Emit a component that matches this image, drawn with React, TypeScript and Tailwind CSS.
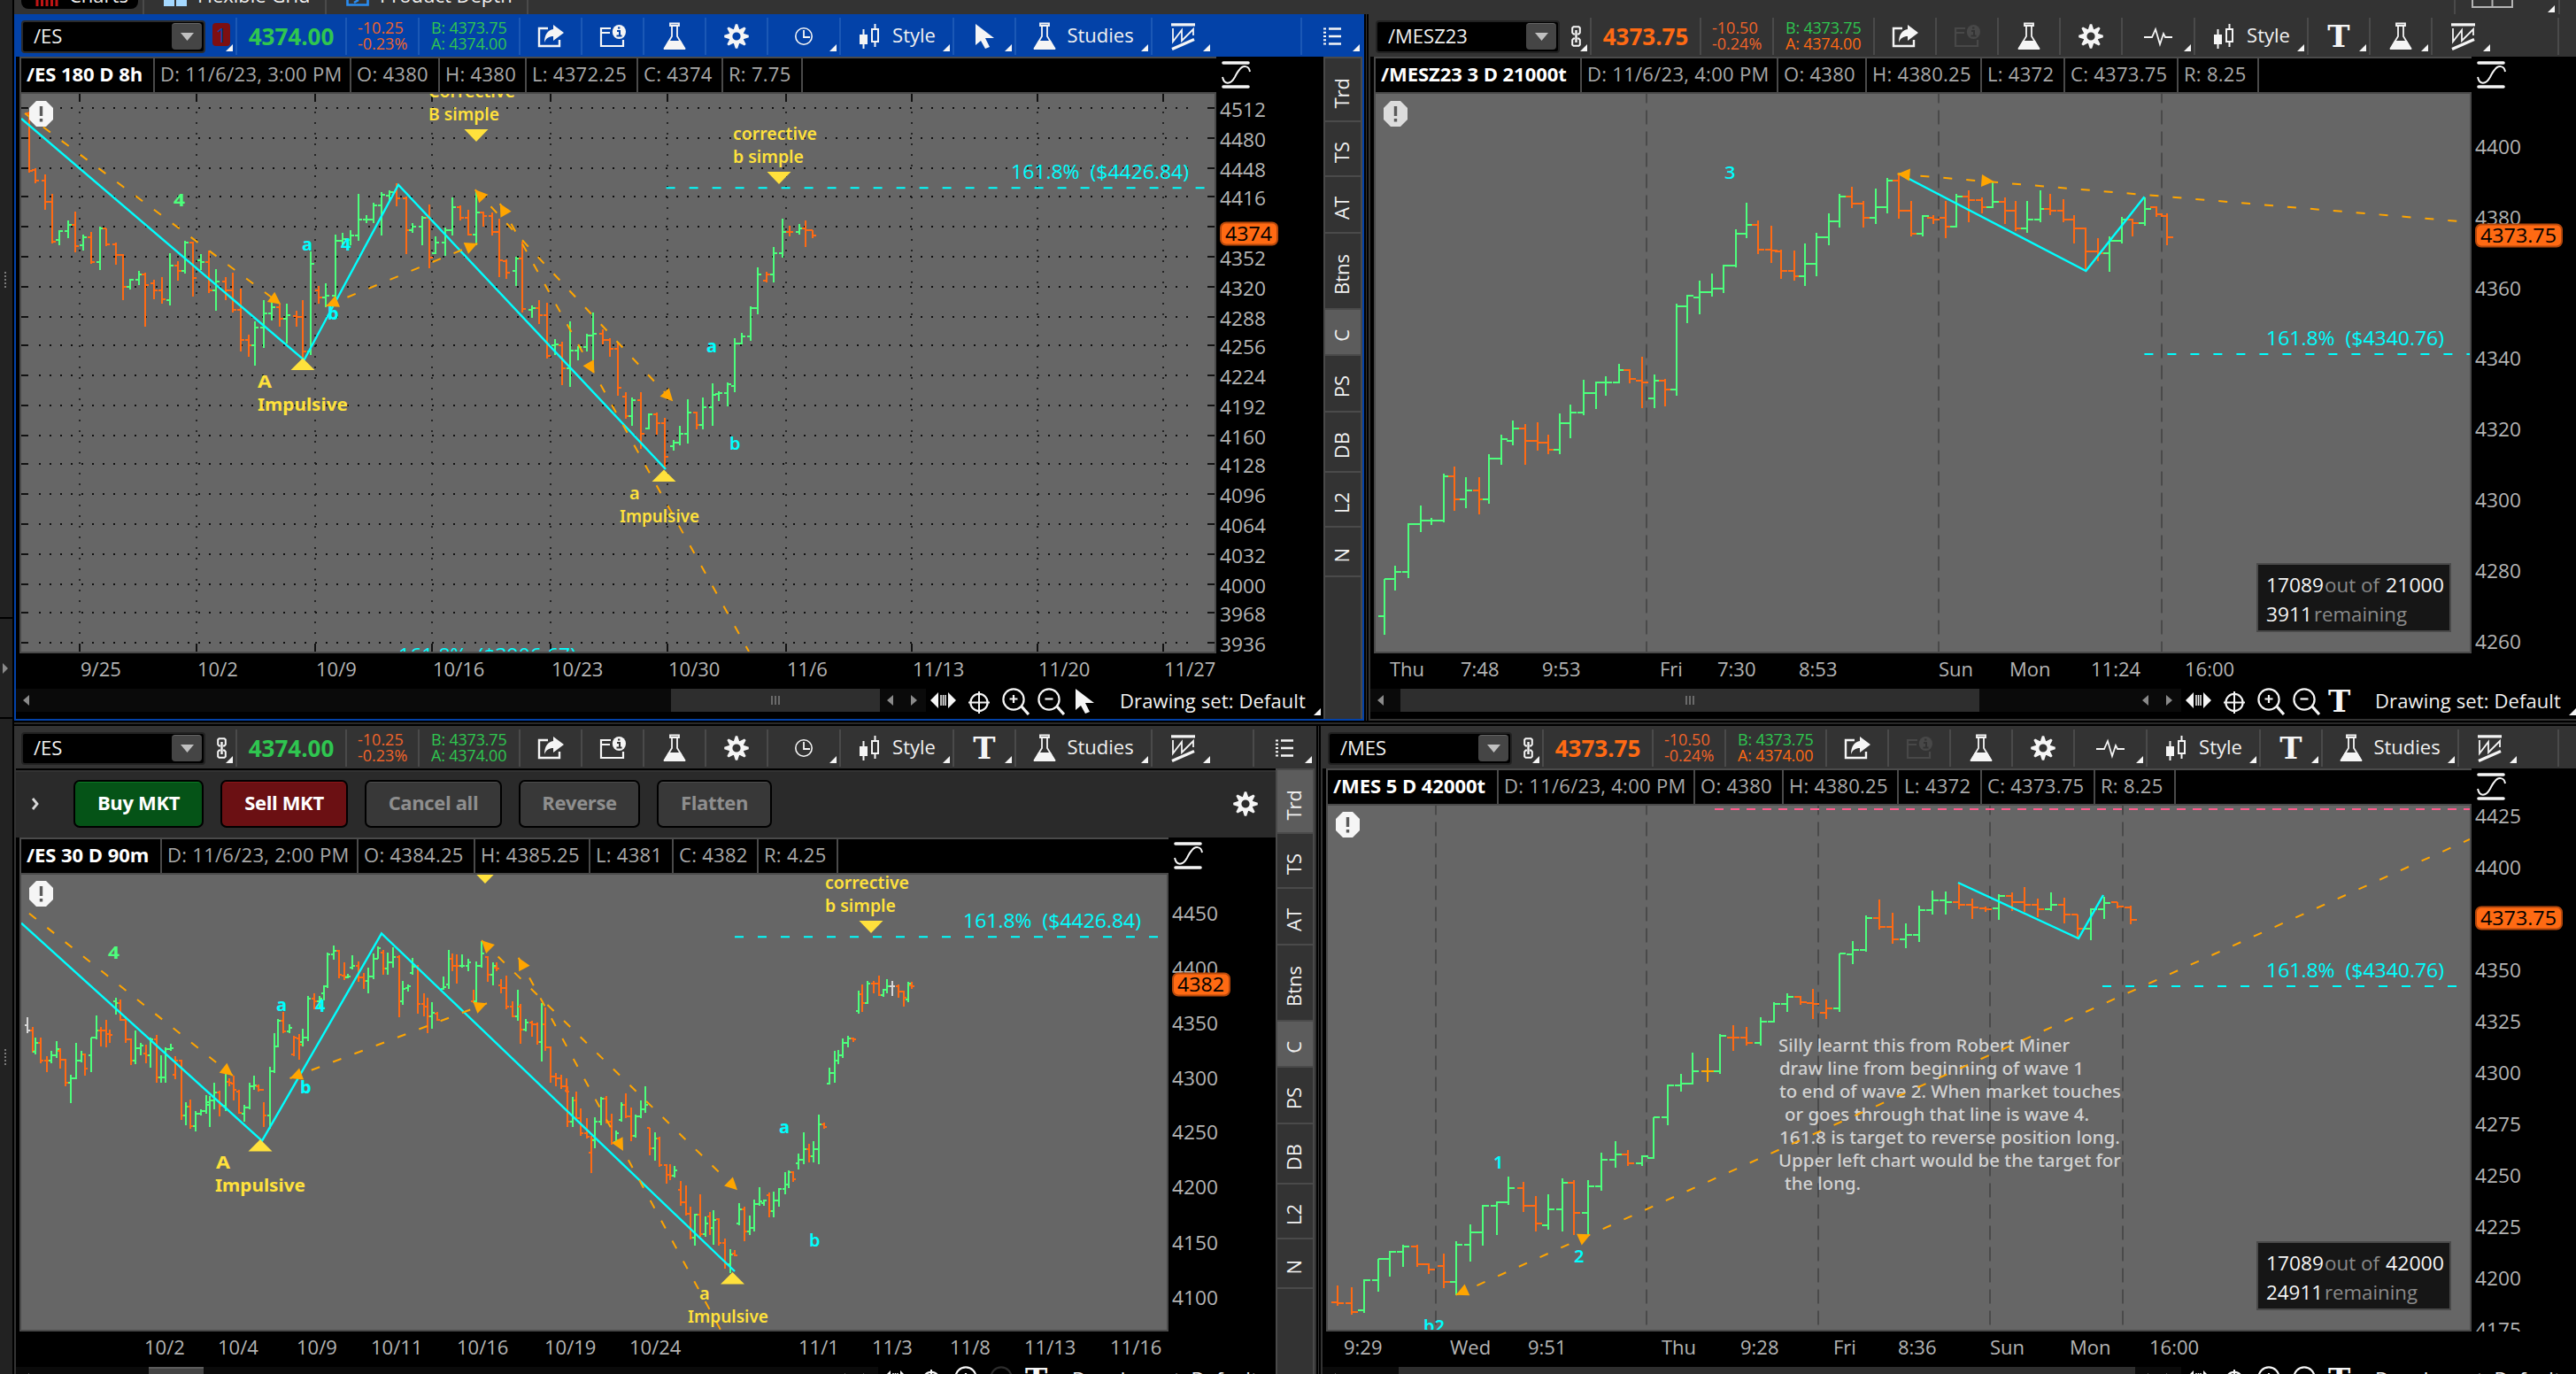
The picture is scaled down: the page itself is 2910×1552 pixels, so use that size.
import type { ReactNode } from "react";

const ORANGE = "#ffa500";
const CYAN = "#00ffff";
const YELLOW = "#ffe13c";
const UP = "#4dff7c";
const DOWN = "#ff6a13";

/* ---------- icons ---------- */

const ShareIcon = () => (
  <svg width="30" height="26" viewBox="0 0 30 26">
    <path d="M12 4H2v20h23v-7" fill="none" stroke="#f5f5f5" strokeWidth="2.4" />
    <path d="M18 0l12 9-12 9v-5c-5 0-8 2-10 7 0-9 4-14 10-15z" fill="#f5f5f5" />
  </svg>
);

const CalendarIcon = ({ color = "#f5f5f5", back = "#333333" }: { color?: string; back?: string }) => (
  <svg width="30" height="26" viewBox="0 0 30 26">
    <path d="M13 4H2v20h25v-7M2 9h10" fill="none" stroke={color} strokeWidth="2.2" />
    <ellipse cx="22.400" cy="8" rx="7.6" ry="8" fill={color} />
    <path d="M20 7h3v5.500M19.5 12.5h6M21 3.6h2.4" fill="none" stroke={back} strokeWidth="2" />
  </svg>
);

const FlaskIcon = () => (
  <svg width="26" height="32" viewBox="0 0 26 32">
    <path d="M8 1.500h10V4H8zM10 4v12L2 29h22L16 16V4" fill="none" stroke="#f5f5f5" strokeWidth="1.8" />
    <path d="M6 21h14l5.500 10h-25z" fill="#f5f5f5" />
  </svg>
);

const GearIcon = () => (
  <svg width="28" height="28" viewBox="-14 -14 28 28">
    {[0, 45, 90, 135, 180, 225, 270, 315].map((a) => (
      <path key={a} d="M-3.4 -7L-1.2 -13.8H1.2L3.4 -7z" fill="#f5f5f5" transform={`rotate(${a})`} />
    ))}
    <circle r="6.6" fill="none" stroke="#f5f5f5" strokeWidth="4" />
  </svg>
);

const ClockIcon = () => (
  <svg width="22" height="22" viewBox="0 0 22 22">
    <circle cx="11" cy="11" r="9.2" fill="none" stroke="#f5f5f5" strokeWidth="1.6" />
    <path d="M11 4v8h7" fill="none" stroke="#f5f5f5" strokeWidth="1.8" />
  </svg>
);

const PulseIcon = () => (
  <svg width="32" height="24" viewBox="0 0 32 24">
    <path d="M0 13h9l4-9 5 17 4-12 2 4h8" fill="none" stroke="#f5f5f5" strokeWidth="1.8" />
  </svg>
);

const CandleIcon = () => (
  <svg width="23" height="28" viewBox="0 0 23 28">
    <path d="M0 12h9v11H0zM3.5 6h2v22h-2z" fill="#f5f5f5" />
    <path d="M14 6h7v14h-7zM17.5 0v6M17.5 20v6" fill="none" stroke="#f5f5f5" strokeWidth="2" />
  </svg>
);

const CursorIcon = () => (
  <svg width="21" height="28" viewBox="0 0 21 28">
    <path d="M0 0v24l6-5 5 9 5-2-5-10h10z" fill="#f5f5f5" />
  </svg>
);

const TextIcon = () => (
  <span className="font-['DejaVu_Serif',serif] text-[34px] font-bold leading-[34px] text-[#f5f5f5]">T</span>
);

const PatternIcon = () => (
  <svg width="27" height="31" viewBox="0 0 27 31">
    <path d="M0 1.8h27M1 29.5l25-11" fill="none" stroke="#f5f5f5" strokeWidth="3.2" />
    <path d="M2 6v15L12 8v12L25 7v7" fill="none" stroke="#f5f5f5" strokeWidth="1.8" />
  </svg>
);

const ListIcon = () => (
  <svg width="20" height="20" viewBox="0 0 20 20">
    <path d="M6 1.5h14M6 10h14M6 18.5h14" stroke="#f5f5f5" strokeWidth="2.6" />
    <path d="M0 1.5h3M0 5.8h3M0 10h3M0 14.2h3M0 18.5h3" stroke="#f5f5f5" strokeWidth="2" />
  </svg>
);

const LinkIcon = () => (
  <svg width="11" height="24" viewBox="0 0 11 24">
    <path
      d="M4 9.500H2.500L1.200 8V2.500L2.500 1.200h6L9.800 2.500V8L8.500 9.500H7M4 14.500H2.500L1.200 16v5.500l1.300 1.300h6l1.300-1.300V16l-1.300-1.500H7"
      fill="none"
      stroke="#f5f5f5"
      strokeWidth="2"
    />
    <path d="M5.500 5v14" stroke="#f5f5f5" strokeWidth="2.4" />
  </svg>
);

const Corner = () => (
  <svg className="absolute bottom-1 right-[3px]" width="8" height="8" viewBox="0 0 8 8">
    <path d="M8 0v8H0z" fill="#f5f5f5" />
  </svg>
);

const MoveIcon = () => (
  <svg width="29" height="18" viewBox="0 0 29 18">
    <path d="M0 9l9-9v18zM29 9l-9-9v18z" fill="#f5f5f5" />
    <path d="M12 3v12M14.5 3v12M17 3v12" stroke="#f5f5f5" strokeWidth="1.5" />
  </svg>
);

const CrosshairIcon = () => (
  <svg width="24" height="25" viewBox="0 0 24 25">
    <circle cx="12" cy="12.5" r="9.6" fill="none" stroke="#f5f5f5" strokeWidth="2.2" />
    <path d="M0 12.5h24M12 0v25" stroke="#f5f5f5" strokeWidth="2" />
  </svg>
);

const ZoomIcon = ({ minus, dim }: { minus?: boolean; dim?: boolean }) => (
  <svg width="31" height="31" viewBox="0 0 31 31">
    <g fill="none" stroke={dim ? "#2c2c2c" : "#f5f5f5"}>
      <circle cx="13" cy="13" r="11.6" strokeWidth="2.2" />
      <path d="M22 21l8 9" strokeWidth="3.2" />
      <path d={minus ? "M8.5 12.5h9" : "M8.5 12.5h9M13 8v9"} strokeWidth="2.2" />
    </g>
  </svg>
);

/* ---------- chart primitives ---------- */

type Bar = [string, number, number, number, number, number];

interface BarsProps {
  x: number;
  y: number;
  sx: number;
  sy?: number;
  tick?: number;
  rows: Bar[];
}

// every row: kind, time, high, low, open, close
const Bars = ({ x, y, sx, sy = 1 / 3, tick = 4, rows }: BarsProps) => (
  <g strokeWidth="2" fill="none">
    {rows.map(([kind, t, h, l, o, c], i) => {
      const px = Math.round(x + t * sx);
      const py = (v: number) => Math.round(y + v * sy);
      const color = kind === "g" ? UP : kind === "r" ? DOWN : kind === "o" ? ORANGE : "#d6d6d6";
      return (
        <path
          key={i}
          stroke={color}
          d={`M${px} ${py(h)}V${py(l)}M${px - tick} ${py(o)}H${px}M${px} ${py(c)}h${tick}`}
        />
      );
    })}
  </g>
);

interface TProps {
  x: number;
  y: number;
  w?: number;
  size?: number;
  fill?: string;
  weight?: number;
  children: ReactNode;
}

const T = ({ x, y, w, size = 22, fill = "#b4b4b4", weight = 400, children }: TProps) => (
  <text
    x={x}
    y={y}
    fontSize={size}
    fontWeight={weight}
    fill={fill}
    textLength={w}
    lengthAdjust="spacingAndGlyphs"
    className="whitespace-pre"
  >
    {children}
  </text>
);

const head = (x: number, y: number, fx: number, fy: number) => {
  const d = Math.hypot(fx - x, fy - y);
  const ux = (fx - x) / d;
  const uy = (fy - y) / d;
  const bx = x + ux * 14;
  const by = y + uy * 14;
  return `M${x} ${y}L${bx - uy * 7} ${by + ux * 7}L${bx + uy * 7} ${by - ux * 7}z`;
};

interface ArrowProps {
  from: [number, number];
  to: [number, number];
  start?: boolean;
  extend?: [number, number];
}

const Arrow = ({ from, to, start, extend }: ArrowProps) => (
  <g>
    <path
      d={`M${from.join(" ")}L${(extend ?? to).join(" ")}`}
      stroke={ORANGE}
      strokeWidth="2"
      strokeDasharray="10 16"
    />
    {start && <path d={head(from[0], from[1], to[0], to[1])} fill={ORANGE} />}
    <path d={head(to[0], to[1], from[0], from[1])} fill={ORANGE} />
  </g>
);

interface LevelProps {
  x1: number;
  x2: number;
  y: number;
  label: string;
  lx: number;
  ly: number;
}

const Level = ({ x1, x2, y, label, lx, ly }: LevelProps) => (
  <g>
    <path d={`M${x1} ${y}H${x2}`} stroke={CYAN} strokeWidth="2" strokeDasharray="10 16" />
    <T x={lx} y={ly} w={201} fill={CYAN}>{label}</T>
  </g>
);

const TriUp = ({ x, y }: { x: number; y: number }) => <path d={`M${x} ${y}l13.5 13.5h-27z`} fill={YELLOW} />;
const TriDown = ({ x, y }: { x: number; y: number }) => <path d={`M${x} ${y}l13.5 -14h-27z`} fill={YELLOW} />;

const Alert = ({ x, y, fill = "#f5f5f5" }: { x: number; y: number; fill?: string }) => (
  <g transform={`translate(${x} ${y})`}>
    <path d="M8 0h11l8 8v13l-8 8H8l-8-8V8z" fill={fill} />
    <path d="M13.5 6v11M13.5 20v3.4" stroke="#5a5a5a" strokeWidth="3.4" />
  </g>
);

const SessionLines = ({ xs, y1, y2 }: { xs: number[]; y1: number; y2: number }) => (
  <g stroke="#4a4a4a" strokeWidth="2" strokeDasharray="16 8">
    {xs.map((x) => (
      <path key={x} d={`M${x} ${y1}V${y2}`} strokeDashoffset="5.5" />
    ))}
  </g>
);

type Label = [string, number, number, string, number, number?];

const Labels = ({ items }: { items: Label[] }) => (
  <g fontFamily="Noto Sans, sans-serif" fontSize="20">
    {items.map(([s, x, y, fill, weight, w], i) => (
      <text key={i} x={x} y={y} fontWeight={weight} fill={fill} textLength={w} lengthAdjust="spacingAndGlyphs">
        {s}
      </text>
    ))}
  </g>
);

/* ---------- bar data ---------- */

const es8h: Bar[] = [
  ["r", 64, 378, 585, 385, 580], ["r", 79, 570, 620, 577, 612], ["r", 99, 592, 710, 612, 685], ["r", 115, 658, 825, 685, 818],
  ["g", 131, 780, 830, 812, 782], ["g", 150, 748, 808, 782, 763], ["r", 166, 718, 855, 763, 835], ["g", 184, 795, 850, 830, 803],
  ["r", 201, 786, 895, 803, 889], ["g", 221, 768, 915, 889, 775], ["r", 236, 773, 835, 775, 829], ["r", 256, 822, 897, 829, 865],
  ["r", 272, 862, 1018, 865, 973], ["g", 288, 945, 980, 973, 949], ["g", 307, 917, 965, 949, 931], ["r", 322, 923, 1108, 931, 965],
  ["r", 342, 947, 1015, 961, 985], ["r", 359, 940, 1029, 985, 1015], ["g", 377, 857, 1035, 1016, 901], ["r", 393, 885, 950, 901, 919],
  ["g", 409, 815, 928, 919, 822], ["r", 428, 818, 1005, 822, 943], ["g", 444, 862, 915, 883, 889], ["r", 463, 848, 993, 889, 985],
  ["g", 479, 911, 1054, 985, 955], ["r", 500, 940, 1018, 955, 985], ["r", 515, 923, 1060, 985, 1051], ["r", 534, 977, 1192, 1051, 1153],
  ["r", 550, 1133, 1210, 1153, 1171], ["g", 565, 1090, 1240, 1171, 1111], ["g", 585, 1017, 1180, 1111, 1063], ["g", 601, 1023, 1085, 1063, 1040],
  ["r", 620, 1030, 1108, 1040, 1081], ["g", 636, 1030, 1165, 1081, 1069], ["r", 656, 1054, 1108, 1072, 1075], ["r", 671, 1018, 1222, 1075, 1190],
  ["g", 687, 851, 1203, 1190, 895], ["r", 706, 970, 1030, 985, 1009], ["g", 722, 960, 1040, 1009, 1003], ["g", 742, 796, 1010, 1003, 817],
  ["g", 759, 790, 830, 817, 810], ["g", 777, 780, 830, 812, 799], ["g", 793, 658, 815, 799, 745], ["g", 812, 730, 755, 745, 745],
  ["g", 828, 688, 755, 745, 697], ["g", 844, 652, 797, 697, 660], ["g", 863, 645, 680, 662, 650], ["r", 879, 622, 700, 650, 673],
  ["r", 899, 665, 862, 673, 781], ["g", 914, 755, 790, 781, 769], ["g", 934, 731, 832, 769, 738], ["r", 950, 694, 910, 738, 873],
  ["g", 964, 802, 862, 859, 823], ["g", 985, 772, 868, 823, 781], ["g", 1001, 670, 797, 781, 703], ["r", 1020, 695, 747, 703, 739],
  ["r", 1036, 712, 798, 739, 794], ["g", 1055, 645, 830, 794, 721], ["r", 1071, 718, 767, 721, 733], ["r", 1090, 720, 797, 733, 787],
  ["r", 1106, 742, 940, 787, 883], ["r", 1122, 880, 945, 886, 925], ["g", 1142, 870, 970, 919, 877], ["r", 1157, 820, 1058, 877, 1046],
  ["g", 1177, 1036, 1077, 1051, 1045], ["r", 1193, 1018, 1097, 1045, 1069], ["r", 1212, 1025, 1215, 1069, 1207], ["g", 1228, 1150, 1203, 1171, 1168],
  ["r", 1244, 1157, 1306, 1171, 1249], ["g", 1263, 1090, 1312, 1249, 1189], ["g", 1279, 1172, 1222, 1189, 1177], ["g", 1299, 1130, 1190, 1177, 1138],
  ["g", 1314, 1060, 1222, 1138, 1130], ["r", 1334, 1115, 1168, 1130, 1153], ["r", 1350, 1145, 1210, 1153, 1183], ["r", 1369, 1160, 1342, 1183, 1315],
  ["r", 1385, 1330, 1420, 1345, 1411], ["g", 1400, 1348, 1443, 1411, 1357], ["r", 1420, 1330, 1522, 1357, 1471], ["g", 1436, 1402, 1455, 1453, 1405],
  ["r", 1455, 1397, 1473, 1405, 1435], ["r", 1471, 1415, 1585, 1435, 1549], ["g", 1491, 1492, 1528, 1513, 1501], ["g", 1506, 1444, 1508, 1501, 1471],
  ["g", 1522, 1354, 1504, 1471, 1399], ["r", 1542, 1396, 1456, 1399, 1441], ["g", 1557, 1348, 1456, 1441, 1381], ["g", 1577, 1300, 1443, 1381, 1339],
  ["g", 1592, 1325, 1360, 1336, 1333], ["g", 1612, 1295, 1378, 1333, 1303], ["g", 1627, 1145, 1330, 1309, 1165], ["g", 1643, 1127, 1168, 1165, 1141],
  ["g", 1663, 1037, 1155, 1141, 1045], ["g", 1678, 905, 1066, 1045, 931], ["r", 1698, 920, 958, 950, 931], ["g", 1713, 838, 958, 931, 859],
  ["g", 1733, 742, 874, 859, 787], ["r", 1749, 766, 802, 787, 787], ["g", 1769, 760, 796, 787, 775], ["r", 1784, 748, 838, 775, 781],
  ["r", 1800, 780, 808, 781, 799],
];

const mesA: Bar[] = [
  ["g", 28, 763, 952, 889, 763], ["g", 41, 718, 802, 763, 739], ["g", 58, 574, 760, 739, 577], ["g", 74, 514, 604, 577, 565],
  ["g", 88, 555, 580, 565, 565], ["g", 104, 405, 570, 565, 415], ["r", 118, 382, 532, 415, 493], ["g", 133, 417, 521, 493, 463],
  ["r", 150, 417, 544, 463, 493], ["g", 163, 340, 508, 493, 355], ["g", 179, 273, 376, 355, 289], ["g", 193, 226, 310, 295, 253],
  ["r", 209, 238, 376, 253, 295], ["r", 225, 232, 328, 295, 301], ["r", 239, 273, 340, 301, 325], ["g", 254, 202, 340, 325, 235],
  ["g", 268, 172, 286, 235, 199], ["g", 285, 88, 208, 199, 133], ["g", 301, 94, 185, 133, 97], ["g", 314, 76, 142, 97, 97],
  ["g", 331, 34, 100, 97, 55], ["r", 345, 52, 100, 55, 85], ["r", 361, 10, 184, 90, 97], ["g", 376, 70, 184, 151, 91],
  ["r", 390, 84, 178, 91, 121], ["g", 405.7, -170, 142, 121, -161],
];

const mesB: Bar[] = [
  ["g", 821, 1000, 1096, 1039, 1003], ["g", 852, 952, 1066, 1009, 991], ["g", 883, 928, 1005, 991, 979], ["g", 911, 898, 994, 979, 901],
  ["g", 942, 778, 905, 901, 793], ["g", 969, 688, 808, 793, 763], ["r", 1000, 748, 862, 763, 847], ["r", 1032, 766, 892, 847, 849],
  ["r", 1058, 845, 946, 853, 919], ["r", 1090, 850, 952, 919, 937], ["g", 1117, 826, 970, 937, 895], ["g", 1148, 790, 935, 895, 805],
  ["g", 1179, 724, 832, 805, 751], ["g", 1206, 658, 772, 751, 667], ["r", 1237, 634, 706, 667, 691], ["r", 1265, 682, 772, 691, 739],
  ["g", 1296, 640, 760, 739, 703], ["g", 1327, 603, 724, 703, 613], ["r", 1355, 586, 742, 613, 715], ["r", 1386, 682, 802, 715, 793],
  ["g", 1416, 730, 802, 793, 733], ["r", 1443, 730, 760, 739, 745], ["r", 1475, 682, 808, 739, 769], ["g", 1502, 658, 772, 769, 667],
  ["r", 1533, 646, 754, 667, 679], ["r", 1565, 670, 724, 679, 703], ["g", 1592, 616, 706, 703, 685], ["r", 1623, 670, 760, 685, 715],
  ["r", 1650, 682, 784, 715, 775], ["g", 1681, 682, 790, 775, 745], ["g", 1713, 646, 754, 745, 709], ["r", 1739, 658, 730, 709, 715],
  ["r", 1771, 676, 754, 715, 745], ["r", 1798, 730, 826, 745, 775], ["r", 1829, 772, 915, 775, 853], ["r", 1860, 808, 886, 853, 859],
  ["g", 1888, 802, 922, 859, 817], ["g", 1919, 736, 826, 817, 745], ["r", 1946, 740, 802, 745, 757], ["g", 1977, 670, 766, 757, 709],
  ["r", 2008, 700, 736, 703, 727], ["r", 2035, 724, 832, 733, 805],
];

const es90A: Bar[] = [
  ["w", 60, 1018, 1072, 1045, 1063], ["r", 72, 1050, 1138, 1063, 1130], ["g", 79, 1085, 1142, 1135, 1103], ["r", 91, 1086, 1172, 1103, 1165],
  ["r", 103, 1150, 1203, 1165, 1165], ["g", 114, 1132, 1172, 1165, 1147], ["g", 126, 1097, 1155, 1147, 1125], ["r", 134, 1122, 1190, 1130, 1160],
  ["r", 146, 1158, 1252, 1160, 1240], ["g", 157, 1212, 1307, 1240, 1225], ["g", 169, 1103, 1228, 1225, 1165], ["g", 181, 1130, 1170, 1165, 1142],
  ["r", 189, 1140, 1215, 1142, 1190], ["g", 201, 1085, 1203, 1147, 1087], ["g", 213, 1012, 1092, 1087, 1062], ["r", 224, 1050, 1115, 1062, 1063],
  ["r", 236, 1025, 1118, 1063, 1075], ["r", 244, 1060, 1105, 1075, 1076], ["g", 256, 952, 1007, 962, 970], ["r", 267, 958, 1030, 970, 1027],
  ["r", 279, 1015, 1105, 1027, 1093], ["r", 291, 1090, 1180, 1093, 1165], ["g", 299, 1062, 1177, 1165, 1122], ["g", 311, 1105, 1145, 1122, 1112],
  ["r", 323, 1110, 1172, 1140, 1147], ["g", 334, 1085, 1187, 1147, 1093], ["r", 346, 1078, 1240, 1093, 1222], ["g", 357, 1145, 1240, 1222, 1220],
  ["g", 366, 1118, 1240, 1220, 1126], ["g", 378, 1108, 1132, 1126, 1123], ["r", 389, 1150, 1226, 1213, 1165], ["r", 401, 1162, 1366, 1165, 1350],
  ["g", 412, 1306, 1384, 1350, 1320], ["r", 422, 1295, 1395, 1320, 1385], ["g", 433, 1335, 1403, 1387, 1345], ["g", 444, 1328, 1350, 1345, 1335],
  ["g", 456, 1282, 1345, 1335, 1305], ["g", 464, 1283, 1390, 1315, 1300], ["g", 475, 1240, 1330, 1300, 1273], ["r", 487, 1265, 1352, 1273, 1318],
  ["g", 499, 1205, 1335, 1318, 1235], ["r", 508, 1225, 1250, 1235, 1240], ["r", 518, 1215, 1300, 1243, 1262], ["r", 530, 1262, 1345, 1268, 1340],
  ["g", 540, 1315, 1370, 1345, 1322], ["g", 553, 1240, 1330, 1322, 1250], ["g", 563, 1215, 1262, 1250, 1247], ["r", 573, 1245, 1270, 1250, 1262],
  ["r", 585, 1305, 1390, 1262, 1351], ["g", 597, 1185, 1395, 1351, 1200], ["g", 608, 1072, 1205, 1200, 1115], ["g", 616, 1022, 1118, 1115, 1028],
  ["r", 628, 1000, 1072, 1028, 1066], ["g", 640, 1042, 1070, 1066, 1052], ["r", 651, 1080, 1148, 1142, 1085], ["r", 663, 1075, 1162, 1090, 1110],
  ["g", 671, 1055, 1115, 1100, 1087], ["g", 683, 945, 1097, 1087, 955], ["r", 695, 935, 990, 955, 962], ["g", 707, 945, 985, 962, 955],
  ["g", 718, 908, 960, 937, 913], ["g", 726, 797, 917, 913, 805], ["g", 738, 773, 823, 805, 792], ["r", 750, 790, 885, 793, 872],
  ["r", 762, 832, 890, 875, 880], ["g", 770, 870, 886, 883, 880], ["g", 781, 808, 855, 850, 843], ["r", 793, 828, 897, 843, 882],
  ["r", 805, 867, 922, 882, 895], ["g", 816, 850, 935, 895, 880], ["g", 828, 800, 887, 880, 818], ["g", 836, 778, 820, 818, 782],
  ["r", 848, 790, 873, 797, 853], ["g", 859, 797, 873, 853, 830], ["g", 871, 780, 848, 830, 812], ["r", 883, 808, 1018, 812, 962],
  ["g", 891, 893, 975, 962, 920], ["g", 903, 905, 930, 918, 912], ["g", 914, 815, 872, 868, 845], ["r", 926, 840, 1006, 845, 972],
  ["r", 938, 935, 1013, 972, 980], ["r", 946, 950, 1072, 980, 1013], ["g", 957, 965, 1055, 1013, 1003], ["r", 969, 998, 1030, 1005, 1027],
  ["g", 981, 880, 925, 920, 915], ["g", 993, 790, 920, 905, 818], ["r", 1001, 802, 862, 818, 843], ["r", 1012, 803, 903, 843, 843],
  ["g", 1024, 803, 850, 843, 842], ["g", 1036, 820, 862, 842, 830], ["r", 1048, 923, 970, 962, 962], ["g", 1055, 828, 982, 962, 842],
  ["g", 1067, 758, 850, 842, 802], ["r", 1079, 810, 897, 812, 872], ["g", 1091, 830, 908, 872, 842], ["r", 1099, 832, 862, 850, 853],
  ["r", 1110, 887, 935, 910, 918], ["r", 1122, 875, 990, 918, 982], ["r", 1134, 962, 1018, 982, 1013], ["g", 1146, 923, 1030, 1015, 980],
  ["r", 1153, 972, 1108, 980, 1060], ["g", 1165, 1023, 1065, 1060, 1035], ["r", 1177, 1030, 1082, 1035, 1040], ["r", 1189, 1035, 1110, 1040, 1100],
  ["g", 1200, 970, 1168, 1100, 1040], ["r", 1208, 985, 1130, 1040, 1118], ["r", 1220, 1115, 1240, 1118, 1218], ["r", 1230, 1207, 1250, 1218, 1225],
  ["r", 1242, 1212, 1260, 1225, 1250], ["r", 1254, 1225, 1272, 1250, 1268],
];

const es90B: Bar[] = [
  ["r", 670, 80, 218, 96, 200], ["g", 676, 118, 218, 200, 128], ["r", 681, 100, 195, 128, 188], ["r", 686, 155, 250, 188, 240],
  ["r", 693, 190, 258, 240, 252], ["r", 698, 248, 376, 305, 262], ["g", 703, 185, 292, 265, 200], ["g", 710, 118, 213, 200, 122],
  ["r", 716, 115, 208, 122, 200], ["r", 722, 175, 278, 200, 272], ["g", 728, 232, 275, 270, 240], ["g", 734, 135, 202, 195, 145],
  ["r", 739, 105, 190, 145, 182], ["r", 745, 152, 268, 182, 248], ["g", 751, 178, 255, 248, 182], ["g", 757, 130, 188, 182, 158],
  ["g", 762, 82, 172, 158, 145], ["r", 767, 222, 315, 222, 290], ["g", 774, 238, 333, 290, 258], ["r", 779, 252, 354, 258, 349],
  ["r", 787, 345, 410, 349, 380], ["r", 791, 345, 400, 380, 385], ["g", 797, 350, 390, 385, 367], ["r", 804, 402, 485, 432, 475],
  ["r", 810, 418, 520, 475, 512], ["r", 815, 490, 600, 512, 595], ["g", 821, 512, 622, 595, 517], ["r", 827, 448, 590, 517, 583],
  ["g", 833, 522, 590, 583, 547], ["r", 838, 508, 585, 522, 560], ["g", 843, 502, 617, 560, 535], ["r", 849, 527, 620, 530, 612],
  ["r", 856, 598, 700, 612, 685], ["g", 862, 633, 713, 685, 650], ["r", 868, 635, 658, 648, 655], ["g", 873, 478, 552, 547, 498],
  ["r", 879, 490, 605, 498, 572], ["g", 885, 520, 585, 572, 560], ["g", 891, 465, 572, 560, 480], ["g", 897, 423, 487, 480, 470],
  ["g", 902, 465, 485, 477, 468], ["r", 908, 440, 525, 450, 505], ["g", 914, 437, 525, 505, 468], ["g", 920, 425, 490, 468, 428],
  ["g", 927, 372, 447, 428, 415], ["g", 931, 365, 427, 415, 373], ["r", 937, 368, 405, 373, 397], ["g", 943, 310, 362, 343, 330],
  ["g", 949, 238, 345, 330, 295], ["r", 955, 275, 338, 295, 318], ["g", 961, 268, 340, 318, 295], ["g", 967, 178, 345, 295, 210],
  ["r", 973, 203, 225, 210, 218],
];

const es90C: Bar[] = [
  ["g", 346, 1187, 1245, 1243, 1207], ["g", 358, 1132, 1240, 1207, 1165], ["g", 366, 1128, 1175, 1165, 1147], ["g", 377, 1090, 1155, 1147, 1105],
  ["g", 389, 1080, 1120, 1105, 1088], ["r", 400, 1085, 1102, 1088, 1093], ["g", 412, 928, 1005, 997, 940], ["r", 420, 905, 1000, 940, 968],
  ["g", 432, 893, 972, 968, 902], ["r", 444, 893, 935, 902, 902], ["r", 456, 875, 945, 902, 943], ["g", 467, 920, 947, 943, 925],
  ["g", 475, 887, 935, 925, 912], ["w", 487, 893, 945, 912, 913], ["r", 499, 905, 952, 913, 930], ["r", 511, 928, 982, 930, 952],
  ["g", 522, 898, 965, 958, 903], ["r", 530, 898, 920, 910, 913],
];

const mes5: Bar[] = [
  ["r", 45, 905, 975, 962, 967], ["r", 80, 911, 1005, 967, 997], ["g", 110, 885, 999, 991, 889], ["g", 145, 815, 928, 889, 817],
  ["g", 175, 790, 875, 817, 793], ["g", 206, 767, 844, 793, 775], ["r", 241, 767, 844, 775, 835], ["r", 271, 832, 867, 835, 853],
  ["r", 306, 797, 915, 841, 895], ["g", 337, 755, 940, 895, 769], ["g", 372, 700, 826, 769, 727], ["g", 402, 634, 772, 727, 637],
  ["g", 437, 622, 736, 637, 625], ["g", 467, 538, 634, 625, 577], ["r", 502, 556, 658, 577, 637], ["r", 533, 604, 724, 637, 697],
  ["g", 563, 598, 718, 703, 649], ["g", 598, 544, 724, 649, 559], ["r", 628, 550, 736, 559, 661], ["g", 663, 550, 736, 661, 571],
  ["g", 694, 455, 586, 571, 481], ["g", 729, 418, 508, 481, 463], ["r", 759, 448, 502, 463, 493], ["g", 794, 466, 502, 493, 469],
  ["g", 824, 335, 478, 475, 337], ["g", 859, 226, 364, 337, 229], ["g", 890, 190, 250, 229, 223], ["g", 920, 118, 226, 223, 181],
  ["o", 955, 136, 215, 181, 181], ["g", 986, 54, 190, 181, 61], ["r", 1020, 23, 112, 67, 67], ["r", 1051, 29, 94, 67, 85],
];

// counted back from the latest bar
const mes5Recent: Bar[] = [
  ["r", 0, 724, 832, 733, 805], ["r", 1, 700, 736, 703, 727], ["g", 2, 670, 802, 745, 709], ["g", 3, 736, 922, 859, 745],
  ["r", 4, 772, 915, 775, 859], ["r", 5, 676, 826, 715, 775], ["g", 6, 646, 754, 745, 715], ["r", 7, 682, 790, 715, 745],
  ["r", 8, 616, 760, 703, 715], ["r", 9, 646, 754, 667, 703], ["g", 10, 658, 808, 739, 667], ["r", 11, 730, 760, 739, 745],
  ["r", 12, 682, 802, 715, 733], ["r", 13, 586, 742, 703, 715], ["g", 14, 640, 772, 691, 703], ["g", 15, 634, 772, 751, 691],
  ["g", 16, 724, 935, 895, 751], ["g", 17, 826, 970, 919, 895], ["r", 18, 766, 946, 847, 919], ["r", 19, 688, 862, 793, 847],
  ["g", 20, 778, 994, 979, 793], ["g", 21, 928, 1066, 1009, 979], ["g", 22, 1000, 1342, 1321, 1003], ["r", 23, 1270, 1384, 1351, 1321],
  ["r", 24, 1210, 1384, 1290, 1297], ["r", 25, 1252, 1300, 1255, 1285], ["g", 26, 1234, 1342, 1297, 1255], ["g", 27, 1288, 1408, 1399, 1297],
  ["g", 28, 1372, 1540, 1525, 1399],
];

/* ---------- toolbar ---------- */

interface ToolbarProps {
  symbol: string;
  active?: boolean;
  price: string;
  up: boolean;
  change: [string, string];
  tool: "cursor" | "text";
  time: "clock" | "pulse";
  studies: boolean;
  tabs: boolean;
}

const Toolbar = ({ symbol, active, price, up, change, tool, time, studies, tabs }: ToolbarProps) => {
  const cell = `relative flex h-[42px] shrink-0 items-center justify-center border-l-2 ${
    active ? "border-[#1b58b5]" : "border-[#4a4a4a]"
  }`;
  return (
    <div className={`flex h-[46px] shrink-0 overflow-hidden pt-0.5 ${active ? "bg-[#0342a8]" : "bg-[#333333]"}`}>
      <div className="relative flex h-[42px] w-[248px] shrink-0 items-center pl-1.5">
        <div
          className={`flex h-[37px] w-[208px] items-center justify-between rounded border-2 bg-black pl-3 pr-0.5 ${
            active ? "border-[#2b2b2b]" : "border-[#222222]"
          }`}
        >
          <span className="pb-[3px] text-[22px] leading-none text-[#f0f0f0]">{symbol}</span>
          <span className="flex h-[30px] w-[34px] items-center justify-center rounded-sm border-t border-[#666666] bg-[#454545]">
            <svg width="15" height="9" viewBox="0 0 15 9">
              <path d="M0 0h15L7.5 9z" fill="#c0c0c0" />
            </svg>
          </span>
        </div>
        {active ? (
          <span className="mb-1 ml-[8px] flex h-[26px] w-[20px] items-center justify-center rounded bg-[#7d0f12] text-[22px] leading-none text-[#0342a8]">
            1
          </span>
        ) : (
          <span className="ml-[13px]">
            <LinkIcon />
          </span>
        )}
        <Corner />
      </div>
      <div className={`${cell} w-[124px] text-[26px] font-bold ${up ? "text-[#2fc650]" : "text-[#ff6a13]"}`}>
        {price}
      </div>
      <div className={`${cell} w-[82px] pb-[3px]`}>
        <div className="w-[56px] text-[18px] leading-[18px] text-[#f0642a]">
          <div>{change[0]}</div>
          <div>{change[1]}</div>
        </div>
      </div>
      <div className={`${cell} w-[114px] pb-[3px]`}>
        <div className="w-[86px] whitespace-nowrap text-[18px] leading-[18px] tracking-[-0.2px]">
          <div className="text-[#2fc650]">B: 4373.75</div>
          <div className={up ? "text-[#2fc650]" : "text-[#ff6a13]"}>A: 4374.00</div>
        </div>
      </div>
      <div className={`${cell} w-[70px]`}>
        <ShareIcon />
      </div>
      <div className={`${cell} w-[70px]`}>
        {up ? <CalendarIcon back={active ? "#0342a8" : "#333333"} /> : <CalendarIcon color="#484848" />}
      </div>
      <div className={`${cell} w-[70px]`}>
        <FlaskIcon />
      </div>
      <div className={`${cell} w-[70px]`}>
        <GearIcon />
      </div>
      <div className={`${cell} w-[82px]`}>
        {time === "clock" ? <ClockIcon /> : <PulseIcon />}
        <Corner />
      </div>
      <div className={`${cell} w-[128px] gap-[14px] pl-0.5 text-[22px] text-[#f0f0f0]`}>
        <CandleIcon />
        <span className="pb-[3px]">Style</span>
        <Corner />
      </div>
      <div className={`${cell} w-[70px]`}>
        {tool === "cursor" ? <CursorIcon /> : <TextIcon />}
        <Corner />
      </div>
      <div className={`${cell} gap-3 text-[22px] text-[#f0f0f0] ${studies ? "w-[154px]" : "w-[70px]"}`}>
        <FlaskIcon />
        {studies && <span className="pb-[3px]">Studies</span>}
        <Corner />
      </div>
      <div className={`${cell} w-[70px]`}>
        <PatternIcon />
        <Corner />
      </div>
      <div className="flex-1" />
      {tabs ? (
        <div className={`${cell} w-[70px]`}>
          <ListIcon />
          <Corner />
        </div>
      ) : (
        <div className={`${cell} w-[23px]`} />
      )}
    </div>
  );
};

/* ---------- panel parts ---------- */

const Header = ({ title, cells }: { title: [string, string]; cells: [string, string][] }) => (
  <div className="flex h-[42px] shrink-0 border-y-2 border-l-2 border-[#4a4a4a] bg-black text-[22px] leading-[35px] tracking-[0.28px]">
    <div className={`${title[1]} shrink-0 whitespace-nowrap border-r-2 border-[#4a4a4a] pl-[6px] font-bold tracking-[-0.05px] text-white`}>
      {title[0]}
    </div>
    {cells.map(([text, width]) => (
      <div key={text} className={`${width} shrink-0 whitespace-nowrap border-r-2 border-[#4a4a4a] pl-1.5 text-[#a8a8a8]`}>
        {text}
      </div>
    ))}
  </div>
);

const SideTabs = ({ first }: { first?: boolean }) => {
  const tabs: [string, string, boolean][] = [
    ["Trd", "h-[72px]", !!first],
    ["TS", "h-[62px]", false],
    ["AT", "h-[64px]", false],
    ["Btns", "h-[86px]", false],
    ["C", "h-[52px]", true],
    ["PS", "h-[64px]", false],
    ["DB", "h-[68px]", false],
    ["L2", "h-[62px]", false],
    ["N", "h-[56px]", false],
  ];
  return (
    <div className="flex w-[44px] shrink-0 flex-col border-x-2 border-t-2 border-[#4a4a4a] bg-[#333333]">
      {tabs.map(([label, height, on]) => (
        <div
          key={label}
          className={`flex shrink-0 items-center justify-center border-b-2 border-[#4a4a4a] pr-1 pt-2 ${height} ${
            on ? "bg-[#5c5c5c]" : "bg-[#333333]"
          }`}
        >
          <span className="rotate-180 text-[22px] leading-none text-[#f0f0f0] [writing-mode:vertical-rl]">{label}</span>
        </div>
      ))}
    </div>
  );
};

interface PlotProps {
  x: number;
  y: number;
  w: number;
  h: number;
  axis: [string, number][];
  pill: [string, number];
  dates: [string, number][];
  title: [string, string];
  cells: [string, string][];
  children: ReactNode;
}

const Plot = ({ x, y, w, h, axis, pill, dates, title, cells, children }: PlotProps) => {
  const ax = x + w + 2;
  const pw = pill[0].length > 4 ? 98 : 65;
  return (
    <div className="flex flex-col">
      <div className="flex">
        <div className="ml-1 flex flex-col">
          <Header title={title} cells={cells} />
          <div className="border-x-2 border-b-2 border-[#4a4a4a] bg-[#666666]">
            <svg className="block" width={w} height={h} viewBox={`${x} ${y} ${w} ${h}`}>
              {children}
            </svg>
          </div>
        </div>
        <svg className="block" width={118} height={h + 44} viewBox={`${ax} ${y - 42} 118 ${h + 44}`}>
          <path d={`M${ax + 8} ${y - 35}h28M${ax + 8} ${y - 8}h28`} stroke="#f5f5f5" strokeWidth="3.6" strokeLinecap="round" />
          <path
            d={`M${ax + 7} ${y - 19}c2 9 9 9 14 0c2 -4 3 -6 5 -8c4 -6 11 -5 12 2`}
            fill="none"
            stroke="#f5f5f5"
            strokeWidth="2"
          />
          {axis.map(([s, by]) => (
            <T key={s} x={ax + 4} y={by} w={52}>{s}</T>
          ))}
          <rect x={ax + 5} y={pill[1] + 1.5} width={pw - 1} height="25" rx="6" fill={DOWN} stroke="#b5480c" strokeWidth="2" />
          <T x={ax + 10} y={pill[1] + 21.5} w={pw - 12} fill="#000000">{pill[0]}</T>
        </svg>
      </div>
      <svg className="block" width={w + 124} height={40} viewBox={`${x - 6} ${y + h + 2} ${w + 124} 40`}>
        {dates.map(([s, dx]) => (
          <T key={s} x={dx} y={y + h + 28}>{s}</T>
        ))}
      </svg>
    </div>
  );
};

interface ScrollProps {
  track: string;
  lead: string;
  thumb: string;
  tool: "cursor" | "text";
  dim?: boolean;
}

const ScrollRow = ({ track, lead, thumb, tool, dim }: ScrollProps) => (
  <div className="flex h-[34px] shrink-0">
    <div className={`${track} flex h-[26px] shrink-0 items-center bg-[#0a0a0a]`}>
      <div className={`${lead} shrink-0 pl-2`}>
        <svg width="7" height="12" viewBox="0 0 7 12">
          <path d="M7 0v12L0 6z" fill="#8a8a8a" />
        </svg>
      </div>
      <div
        className={`${thumb} flex h-full shrink-0 items-center justify-center gap-0.5 ${
          dim ? "border-t-2 border-[#5c5c5c] bg-[#444444]" : "bg-[#2e2e2e]"
        }`}
      >
        <i className="h-2.5 w-0.5 bg-[#6a6a6a]" />
        <i className="h-2.5 w-0.5 bg-[#6a6a6a]" />
        <i className="h-2.5 w-0.5 bg-[#6a6a6a]" />
      </div>
      <div className="flex flex-1 justify-end gap-5 pr-2.5">
        <svg width="7" height="12" viewBox="0 0 7 12">
          <path d="M7 0v12L0 6z" fill="#8a8a8a" />
        </svg>
        <svg width="7" height="12" viewBox="0 0 7 12">
          <path d="M0 0v12l7-6z" fill="#8a8a8a" />
        </svg>
      </div>
    </div>
    <div className="relative flex w-[448px] shrink-0">
      <div className="ml-[5px] mt-1 w-[43px]"><MoveIcon /></div>
      <div className="mt-[3px] w-[38px]"><CrosshairIcon /></div>
      <div className="-mt-px w-[40px]"><ZoomIcon /></div>
      <div className="-mt-px w-[43px]"><ZoomIcon minus dim={dim} /></div>
      <div className={tool === "cursor" ? "w-[50px]" : "-ml-[3px] -mt-[3px] w-[53px]"}>
        {tool === "cursor" ? <CursorIcon /> : <TextIcon />}
      </div>
      <div className="whitespace-nowrap text-[22px] leading-[27px] tracking-[0.1px] text-[#f0f0f0]">Drawing set: Default</div>
      <svg className="absolute bottom-1 right-0.5" width="8" height="8" viewBox="0 0 8 8">
        <path d="M8 0v8H0z" fill="#f5f5f5" />
      </svg>
    </div>
  </div>
);

const Remaining = ({ y, total, left, rx }: { y: number; total: string; left: string; rx: number }) => (
  <g>
    <rect x="2550" y={y + 1} width="218" height="76" fill="#161616" stroke="#4a4a4a" strokeWidth="2" />
    <T x={2560} y={y + 33} w={65} fill="#f5f5f5">17089</T>
    <T x={2626} y={y + 33} w={62} fill="#8a8a8a">out of</T>
    <T x={2695} y={y + 33} w={66} fill="#f5f5f5">{total}</T>
    <T x={2560} y={y + 66} w={rx - 2562} fill="#f5f5f5">{left}</T>
    <T x={rx} y={y + 66} w={105} fill="#8a8a8a">remaining</T>
  </g>
);

const TradeBar = () => {
  const grey = "border-t-[#4c4c4c] bg-[#383838] text-[#8e8e8e]";
  const buttons: [string, string][] = [
    ["Buy MKT", "w-[145px] border-t-[#0a7a22] bg-[#055317] text-white"],
    ["Sell MKT", "w-[142px] border-t-[#8a1518] bg-[#6b1013] text-white"],
    ["Cancel all", `w-[153px] ${grey}`],
    ["Reverse", `w-[135px] ${grey}`],
    ["Flatten", `w-[128px] ${grey}`],
  ];
  return (
    <div className="mt-0.5 flex h-[76px] shrink-0 items-center gap-[21px] border-t-2 border-[#333333] bg-[#2a2a2a] pb-[3px] pl-[17px] pr-[20px]">
      <svg className="mr-[18px]" width="10" height="14" viewBox="0 0 10 14">
        <path d="M2 1l5 6-5 6" fill="none" stroke="#d8d8d8" strokeWidth="2.8" />
      </svg>
      {buttons.map(([label, look]) => (
        <div
          key={label}
          className={`${look} flex h-[52px] shrink-0 items-center justify-center whitespace-nowrap rounded-md border-t-2 pb-1 text-[22px] font-bold tracking-[-0.35px] outline-2 -outline-offset-1 outline-black`}
        >
          {label}
        </div>
      ))}
      <div className="flex-1" />
      <GearIcon />
    </div>
  );
};

/* ---------- panels ---------- */

const gridX = [90, 222, 356, 488, 622, 754, 888, 1030, 1172, 1314];
const gridY = [122, 156, 190, 222, 256, 290, 324, 358, 390, 424, 458, 492, 524, 558, 592, 626, 660, 692, 726];
const esDates = ["9/25", "10/2", "10/9", "10/16", "10/23", "10/30", "11/6", "11/13", "11/20", "11/27"];

const TopLeft = () => (
  <section className="flex h-[798px] w-[1525px] shrink-0 flex-col border-2 border-[#0342a8]">
    <Toolbar symbol="/ES" active price="4374.00" up change={["-10.25", "-0.23%"]} tool="cursor" time="clock" studies tabs />
    <div className="flex flex-1">
      <div className="flex flex-1 flex-col">
        <Plot
          x={24}
          y={106}
          w={1348}
          h={630}
          title={["/ES 180 D 8h", "w-[151px]"]}
          cells={[
            ["D: 11/6/23, 3:00 PM", "w-[222px]"],
            ["O: 4380", "w-[100px]"],
            ["H: 4380", "w-[98px]"],
            ["L: 4372.25", "w-[126px]"],
            ["C: 4374", "w-[96px]"],
            ["R: 7.75", "w-[90px]"],
          ]}
          axis={gridY.map((g, i): [string, number] => [String(4512 - i * 32), g + 10]).filter(([s]) => s !== "4384")}
          pill={["4374", 250]}
          dates={esDates.map((d, i): [string, number] => [d, gridX[i] + 1])}
        >
          <g stroke="#111111" strokeWidth="2">
            {gridY.map((y) => (
              <path key={y} d={`M44 ${y}H1346`} strokeDasharray="2 10" />
            ))}
            {gridX.map((x) => (
              <path key={x} d={`M${x} 126V724`} strokeDasharray="2 10" strokeWidth="1.500" />
            ))}
            {gridY.map((y) => (
              <path key={y} d={`M24 ${y}h8M1364 ${y}h8`} />
            ))}
            {gridX.map((x) => (
              <path key={x} d={`M${x} 106v9M${x} 727v9`} />
            ))}
          </g>
          <Bars x={0} y={0} sx={0.5102} rows={es8h} />
          <path d="M24 134L343.5 406.7L450 208.7L752 530" fill="none" stroke={CYAN} strokeWidth="2.4" />
          <Arrow from={[28, 128]} to={[317.3, 343.7]} />
          <Arrow from={[368.4, 345.7]} to={[539.3, 275]} start />
          <Arrow from={[536.7, 214.3]} to={[760.2, 453.3]} start />
          <Arrow from={[564.8, 230]} to={[671.5, 422]} extend={[846, 736]} start />
          <Level x1={752.6} x2={1364} y={212.3} label="161.8%  ($4426.84)" lx={1142} ly={201.5} />
          <T x={450} y={748} w={201} fill={CYAN}>161.8%  ($3906.67)</T>
          <TriDown x={538} y={160} />
          <TriDown x={880} y={208} />
          <TriUp x={342} y={404.5} />
          <TriUp x={750} y={530.5} />
          <Labels
            items={[
              ["Corrective", 484, 110, YELLOW, 600, 98],
              ["B simple", 484, 136, YELLOW, 600, 80],
              ["corrective", 828, 158, YELLOW, 600, 95],
              ["b simple", 828, 184, YELLOW, 600, 80],
              ["4", 196, 233, UP, 700, 13],
              ["a", 341, 283, CYAN, 700],
              ["4", 385, 283, CYAN, 700],
              ["b", 370, 361, CYAN, 700],
              ["A", 291, 438, YELLOW, 700, 16],
              ["Impulsive", 291, 464, YELLOW, 700, 102],
              ["a", 711, 564, YELLOW, 600],
              ["Impulsive", 700, 590, YELLOW, 600, 90],
              ["a", 798, 398, CYAN, 700],
              ["b", 824, 508, CYAN, 600],
            ]}
          />
          <Alert x={33} y={114} />
        </Plot>
        <ScrollRow track="w-[1028px]" lead="w-[740px]" thumb="w-[236px]" tool="cursor" />
      </div>
      <SideTabs />
    </div>
  </section>
);

const TopRight = () => (
  <section className="flex h-[798px] flex-1 flex-col overflow-hidden border-y-2 border-l-2 border-[#333333]">
    <Toolbar symbol="/MESZ23" price="4373.75" up={false} change={["-10.50", "-0.24%"]} tool="text" time="pulse" studies={false} tabs={false} />
    <Plot
      x={1554}
      y={106}
      w={1236}
      h={630}
      title={["/MESZ23 3 D 21000t", "w-[233px]"]}
      cells={[
        ["D: 11/6/23, 4:00 PM", "w-[222px]"],
        ["O: 4380", "w-[100px]"],
        ["H: 4380.25", "w-[130px]"],
        ["L: 4372", "w-[94px]"],
        ["C: 4373.75", "w-[128px]"],
        ["R: 8.25", "w-[91px]"],
      ]}
      axis={[["4400", 174], ["4380", 254], ["4360", 334], ["4340", 413], ["4320", 493], ["4300", 573], ["4280", 653], ["4260", 733]]}
      pill={["4373.75", 252]}
      dates={[["Thu", 1570], ["7:48", 1650], ["9:53", 1742], ["Fri", 1875], ["7:30", 1940], ["8:53", 2032], ["Sun", 2190], ["Mon", 2270], ["11:24", 2362], ["16:00", 2468]]}
    >
      <SessionLines xs={[1860, 2190, 2442]} y1={106} y2={736} />
      <Bars x={1540} y={400} sx={0.8737} tick={7} rows={mesA} />
      <Bars x={1540} y={0} sx={0.4464} tick={7} rows={mesB} />
      <path d="M2145 196L2356.4 306L2422.5 222.3" fill="none" stroke={CYAN} strokeWidth="2.4" />
      <Arrow from={[2143.5, 196.5]} to={[2252.4, 205]} extend={[2778, 250]} start />
      <Level x1={2422.4} x2={2790} y={400} label="161.8%  ($4340.76)" lx={2560} ly={390} />
      <Labels items={[["3", 1948, 202, CYAN, 500, 12.5]]} />
      <Alert x={1563} y={114} fill="#dcdcdc" />
      <Remaining y={636} total="21000" left="3911" rx={2614} />
    </Plot>
    <ScrollRow track="w-[916px]" lead="w-[34px]" thumb="w-[654px]" tool="text" />
  </section>
);

const BottomLeft = () => (
  <section className="flex w-[1471px] shrink-0 flex-col overflow-hidden border-x-2 border-t-2 border-[#333333]">
    <Toolbar symbol="/ES" price="4374.00" up change={["-10.25", "-0.23%"]} tool="text" time="clock" studies tabs />
    <div className="flex flex-1">
      <div className="flex flex-1 flex-col">
        <TradeBar />
        <Plot
          x={24}
          y={988}
          w={1294}
          h={514}
          title={["/ES 30 D 90m", "w-[159px]"]}
          cells={[
            ["D: 11/6/23, 2:00 PM", "w-[222px]"],
            ["O: 4384.25", "w-[132px]"],
            ["H: 4385.25", "w-[130px]"],
            ["L: 4381", "w-[94px]"],
            ["C: 4382", "w-[96px]"],
            ["R: 4.25", "w-[90px]"],
          ]}
          axis={[["4450", 1040], ["4400", 1102], ["4350", 1164], ["4300", 1226], ["4250", 1287], ["4200", 1349], ["4150", 1412], ["4100", 1474]]}
          pill={["4382", 1098]}
          dates={[["10/2", 163], ["10/4", 246], ["10/9", 335], ["10/11", 419], ["10/16", 516], ["10/19", 615], ["10/24", 711], ["11/1", 902], ["11/3", 985], ["11/8", 1073], ["11/13", 1157], ["11/16", 1254]]}
        >
          <Bars x={0} y={810} sx={0.5102} tick={3} rows={es90A} />
          <Bars x={0} y={1200} sx={0.9566} tick={3} rows={es90B} />
          <Bars x={760} y={810} sx={0.5102} tick={3} rows={es90C} />
          <path d="M24 1042.7L296 1288.7L431 1054.3L830 1436" fill="none" stroke={CYAN} strokeWidth="2.4" />
          <Arrow from={[33, 1031.7]} to={[263, 1215]} />
          <Arrow from={[327.5, 1218]} to={[550, 1133.3]} start />
          <Arrow from={[544, 1062.3]} to={[833, 1344.3]} start />
          <Arrow from={[585.7, 1081.7]} to={[704, 1300]} extend={[814, 1502]} start />
          <Level x1={830} x2={1310} y={1058.3} label="161.8%  ($4426.84)" lx={1088} ly={1048} />
          <TriDown x={548} y={998} />
          <TriDown x={984} y={1054} />
          <TriUp x={294} y={1287} />
          <TriUp x={827.5} y={1437} />
          <Labels
            items={[
              ["corrective", 932, 1004, YELLOW, 600, 95],
              ["b simple", 932, 1030, YELLOW, 600, 80],
              ["4", 122, 1083, UP, 700, 13],
              ["a", 312, 1142, CYAN, 700],
              ["4", 356, 1143, CYAN, 700],
              ["b", 339, 1235, CYAN, 700],
              ["A", 244, 1320, YELLOW, 700, 16],
              ["Impulsive", 243, 1346, YELLOW, 700, 102],
              ["a", 790, 1468, YELLOW, 600],
              ["Impulsive", 777, 1494, YELLOW, 600, 91],
              ["a", 880, 1280, CYAN, 700],
              ["b", 914, 1408, CYAN, 600],
            ]}
          />
          <Alert x={33} y={995} />
        </Plot>
        <ScrollRow track="w-[974px]" lead="w-[150px]" thumb="w-[62px]" tool="text" dim />
      </div>
      <SideTabs first />
    </div>
  </section>
);

const note: [string, number, number][] = [
  ["Silly learnt this from Robert Miner", 2009, 329],
  ["draw line from beginning of wave 1", 2010, 344],
  ["to end of wave 2. When market touches", 2010, 386],
  ["or goes through that line is wave 4.", 2016, 344],
  ["161.8 is target to reverse position long.", 2010, 385],
  ["Upper left chart would be the target for", 2009, 387],
  ["the long.", 2016, 86],
];

const BottomRight = () => (
  <section className="flex flex-1 flex-col overflow-hidden border-l-2 border-t-2 border-[#333333]">
    <Toolbar symbol="/MES" price="4373.75" up={false} change={["-10.50", "-0.24%"]} tool="text" time="pulse" studies tabs={false} />
    <Plot
      x={1500}
      y={910}
      w={1290}
      h={592}
      title={["/MES 5 D 42000t", "w-[193px]"]}
      cells={[
        ["D: 11/6/23, 4:00 PM", "w-[222px]"],
        ["O: 4380", "w-[100px]"],
        ["H: 4380.25", "w-[130px]"],
        ["L: 4372", "w-[94px]"],
        ["C: 4373.75", "w-[128px]"],
        ["R: 8.25", "w-[91px]"],
      ]}
      axis={[["4425", 930], ["4400", 988], ["4350", 1104], ["4325", 1162], ["4300", 1220], ["4275", 1278], ["4250", 1336], ["4225", 1394], ["4200", 1452], ["4175", 1510]]}
      pill={["4373.75", 1023]}
      dates={[["9:29", 1518], ["Wed", 1638], ["9:51", 1726], ["Thu", 1877], ["9:28", 1966], ["Fri", 2071], ["8:36", 2144], ["Sun", 2248], ["Mon", 2338], ["16:00", 2428]]}
    >
      <SessionLines xs={[1622, 1860, 2054, 2248, 2398]} y1={910} y2={1498} />
      <path d="M1937 914H2790" stroke="#ff5a8c" strokeWidth="2" strokeDasharray="10 8" />
      <Bars x={1490} y={1150} sx={0.4592} tick={7} rows={mes5} />
      <Bars x={2407} y={883.3} sx={-14.94} sy={0.1933} tick={7} rows={mes5Recent} />
      <path d="M2212 997L2348 1060L2376 1011" fill="none" stroke={CYAN} strokeWidth="2.4" />
      <Labels items={note.map(([s, x, w], i): Label => [s, x, 1188 + i * 26, "#d2d2d2", 500, w])} />
      <Arrow from={[1644.7, 1462.7]} to={[1796.7, 1394.3]} extend={[2790, 948]} start />
      <Level x1={2375} x2={2790} y={1114} label="161.8%  ($4340.76)" lx={2560} ly={1103.5} />
      <Labels
        items={[
          ["1", 1687, 1320, CYAN, 600],
          ["2", 1778, 1426, CYAN, 600],
          ["b2", 1608, 1505, CYAN, 600],
        ]}
      />
      <Alert x={1509} y={917} />
      <Remaining y={1402} total="42000" left="24911" rx={2626} />
    </Plot>
    <ScrollRow track="w-[970px]" lead="w-[86px]" thumb="w-[832px]" tool="text" />
  </section>
);

/* ---------- shell ---------- */

const TopBar = () => (
  <div className="flex h-4 shrink-0 overflow-hidden bg-[#333333] text-[22px] leading-[30px] text-[#f0f0f0]">
    <div className="flex h-4 w-[147px] border-r-2 border-[#4a4a4a] pl-2">
      <div className="flex h-2.5 w-[132px] gap-3 rounded-b-lg bg-black pl-4">
        <svg width="26" height="8" viewBox="0 0 26 8">
          <path d="M2 0v7M7.5 0v7M13 0v7M18.500 0v7M24 0v7" stroke="#c01414" strokeWidth="3" />
        </svg>
        <span className="-mt-[21px] whitespace-nowrap">Charts</span>
      </div>
    </div>
    <div className="flex h-4 w-[206px] gap-3 border-r-2 border-[#4a4a4a] pl-[22px]">
      <svg width="26" height="8" viewBox="0 0 26 8">
        <path d="M0 0h12v7H0zM14 0h12v7H14z" fill="#a4d8ff" />
      </svg>
      <span className="-mt-[21px] whitespace-nowrap">Flexible Grid</span>
    </div>
    <div className="flex h-4 w-[228px] gap-3 border-r-2 border-[#4a4a4a] pl-[22px]">
      <svg width="26" height="8" viewBox="0 0 26 8">
        <path d="M1.500 0v5.500h23V0M9 3l5-3" fill="none" stroke="#2a8cf0" strokeWidth="2.600" />
      </svg>
      <span className="-mt-[21px] whitespace-nowrap">Product Depth</span>
    </div>
    <div className="flex-1" />
    <div className="flex h-4 w-[120px] items-start justify-between border-x-2 border-[#4a4a4a] pl-[18px] pr-1">
      <svg width="47" height="10" viewBox="0 0 47 10">
        <path d="M1 0v8h45V0M23.500 0v8" fill="none" stroke="#b4b4b4" strokeWidth="2" />
      </svg>
      <svg className="mt-1.5" width="8" height="8" viewBox="0 0 8 8">
        <path d="M8 0v8H0z" fill="#f5f5f5" />
      </svg>
    </div>
    <div className="w-5" />
  </div>
);

const Grip = () => (
  <svg width="4" height="18" viewBox="0 0 4 18">
    <path d="M2 0v18" stroke="#7a7a7a" strokeWidth="2" strokeDasharray="2 2" />
  </svg>
);

const App = () => (
  <div className="flex h-[1552px] w-[2910px] overflow-hidden bg-black font-['Open_Sans','Noto_Sans',sans-serif]">
    <div className="flex w-4 shrink-0 flex-col border-r-2 border-black bg-[#222222]">
      <div className="h-[699px] shrink-0 border-b-2 border-black pl-1 pt-[307px]">
        <Grip />
      </div>
      <div className="h-[113px] shrink-0 border-b-2 border-black pl-[3px] pt-[50px]">
        <svg width="6" height="12" viewBox="0 0 6 12">
          <path d="M0 0v12l6-6z" fill="#8a8a8a" />
        </svg>
      </div>
      <div className="pl-1 pt-[373px]">
        <Grip />
      </div>
    </div>
    <div className="flex flex-1 flex-col">
      <TopBar />
      <div className="flex h-[798px] shrink-0">
        <TopLeft />
        <div className="mx-0.5 w-px bg-[#333333]" />
        <TopRight />
      </div>
      <div className="my-0.5 h-0.5 shrink-0 bg-[#2a2a2a]" />
      <div className="flex h-[732px] shrink-0">
        <BottomLeft />
        <div className="mx-0.5 w-px bg-[#333333]" />
        <BottomRight />
      </div>
    </div>
  </div>
);

export default App;
